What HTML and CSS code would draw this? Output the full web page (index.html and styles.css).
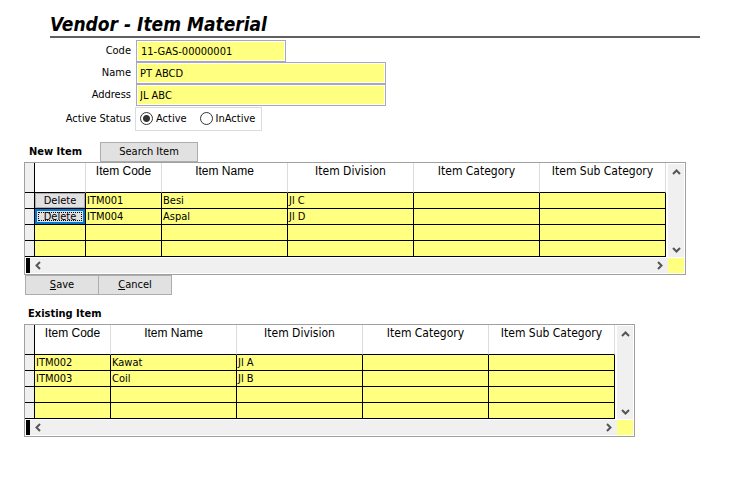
FILE: index.html
```html
<!DOCTYPE html>
<html lang="en">
<head>
<meta charset="utf-8">
<title>Vendor - Item Material</title>
<link rel="stylesheet" href="styles.css">
</head>
<body>
<main class="page">
  <h1 class="title">Vendor - Item Material</h1>

  <form class="vendor">
    <label for="code">Code</label>
    <input class="field field-short field-indent" id="code" type="text" value="11-GAS-00000001">
    <label for="name">Name</label>
    <input class="field" id="name" type="text" value="PT ABCD">
    <label for="address">Address</label>
    <input class="field" id="address" type="text" value="JL ABC">
    <span id="status-label">Active Status</span>
    <div class="status" role="radiogroup" aria-labelledby="status-label">
      <label class="option"><input type="radio" name="status" checked>Active</label>
      <label class="option"><input type="radio" name="status">InActive</label>
    </div>
  </form>

  <section class="new-item">
    <div class="section-head">
      <h2>New Item</h2>
      <button class="btn btn-search" type="button">Search Item</button>
    </div>
    <div class="grid grid-new">
      <div class="sheet">
        <table>
          <colgroup><col class="c-mark"><col class="c-action"><col class="c-code"><col><col><col><col></colgroup>
          <thead>
            <tr><th class="mark"></th><th></th><th class="alt">Item Code</th><th class="alt">Item Name</th><th>Item Division</th><th>Item Category</th><th>Item Sub Category</th></tr>
          </thead>
          <tbody>
            <tr><td class="mark"></td><td class="action"><button class="delete" type="button">Delete</button></td><td>ITM001</td><td>Besi</td><td>Jl C</td><td></td><td></td></tr>
            <tr><td class="mark"></td><td class="action"><button class="delete delete-current" type="button">Delete</button></td><td>ITM004</td><td>Aspal</td><td>Jl D</td><td></td><td></td></tr>
            <tr><td class="mark"></td><td></td><td></td><td></td><td></td><td></td><td></td></tr>
            <tr><td class="mark"></td><td></td><td></td><td></td><td></td><td></td><td></td></tr>
          </tbody>
        </table>
      </div>
      <div class="vbar">
        <svg width="9" height="6" viewBox="0 0 9 6"><path d="M1 5 4.500 1.500 8 5"/></svg>
        <svg width="9" height="6" viewBox="0 0 9 6"><path d="M1 1 4.500 4.500 8 1"/></svg>
      </div>
      <div class="hbar">
        <svg width="6" height="9" viewBox="0 0 6 9"><path d="M5 1 1.500 4.500 5 8"/></svg>
        <svg width="6" height="9" viewBox="0 0 6 9"><path d="M1 1 4.500 4.500 1 8"/></svg>
      </div>
      <div class="corner"></div>
    </div>
    <div class="actions">
      <button class="btn" type="button"><u>S</u>ave</button>
      <button class="btn" type="button"><u>C</u>ancel</button>
    </div>
  </section>

  <section class="existing-item">
    <h2>Existing Item</h2>
    <div class="grid grid-existing">
      <div class="sheet">
        <table>
          <colgroup><col class="c-mark"><col class="c-code"><col><col><col><col></colgroup>
          <thead>
            <tr><th class="mark"></th><th class="alt">Item Code</th><th class="alt">Item Name</th><th>Item Division</th><th>Item Category</th><th>Item Sub Category</th></tr>
          </thead>
          <tbody>
            <tr><td class="mark"></td><td>ITM002</td><td>Kawat</td><td>Jl A</td><td></td><td></td></tr>
            <tr><td class="mark"></td><td>ITM003</td><td>Coil</td><td>Jl B</td><td></td><td></td></tr>
            <tr><td class="mark"></td><td></td><td></td><td></td><td></td><td></td></tr>
            <tr><td class="mark"></td><td></td><td></td><td></td><td></td><td></td></tr>
          </tbody>
        </table>
      </div>
      <div class="vbar">
        <svg width="9" height="6" viewBox="0 0 9 6"><path d="M1 5 4.500 1.500 8 5"/></svg>
        <svg width="9" height="6" viewBox="0 0 9 6"><path d="M1 1 4.500 4.500 8 1"/></svg>
      </div>
      <div class="hbar">
        <svg width="6" height="9" viewBox="0 0 6 9"><path d="M5 1 1.500 4.500 5 8"/></svg>
        <svg width="6" height="9" viewBox="0 0 6 9"><path d="M1 1 4.500 4.500 1 8"/></svg>
      </div>
      <div class="corner"></div>
    </div>
  </section>
</main>
</body>
</html>
```
FILE: styles.css
```css
* { box-sizing: border-box; }

body {
  margin: 0;
  background: #fff;
  color: #000;
  font: 11px/14px Tahoma, "DejaVu Sans Condensed", "DejaVu Sans", sans-serif;
}

button, input { font: inherit; color: inherit; }

.page { padding: 12px 50px 24px 24px; }

.title {
  margin: 0 0 2px 26px;
  border-bottom: 2px solid #606060;
  font-size: 19px;
  line-height: 24px;
  font-style: italic;
}

h2 {
  margin: 0;
  font-size: 11px;
  line-height: 14px;
}

/* Vendor form */
.vendor {
  display: grid;
  grid-template-columns: 107px minmax(0, 250px);
  grid-template-rows: repeat(3, 22px) 25px;
  column-gap: 5px;
  align-items: center;
}

.vendor > label, .vendor > span { text-align: right; }

.field {
  width: 100%;
  height: 22px;
  border: 1px solid #a9a9b4;
  padding: 0 3px;
  background: #ffff80;
  box-shadow: inset 0 0 0 1px #fff;
}

.field-short { width: 150px; }
.field-indent { padding-left: 4px; }

.status {
  display: flex;
  gap: 13px;
  justify-self: start;
  margin-left: -1px;
  border: 1px solid #dcdcdc;
  padding: 4px 6px 4px 4px;
}

.option {
  display: flex;
  align-items: center;
  gap: 3px;
}

.option input {
  appearance: none;
  width: 13px;
  height: 13px;
  margin: 0;
  border: 1px solid #333;
  border-radius: 50%;
  background: #fff;
}

.option input:checked { background: radial-gradient(circle, #333 3px, #fff 4px); }

/* Buttons */
.btn {
  height: 20px;
  min-width: 74px;
  border: 1px solid #adadad;
  padding: 0 8px;
  background: #e1e1e1;
}

.section-head {
  display: flex;
  align-items: center;
  gap: 18px;
  margin-top: 11px;
  padding-left: 5px;
}

.btn-search { min-width: 98px; }

.actions { display: flex; margin-left: 1px; }
.actions .btn + .btn { margin-left: -1px; }

/* Data grids */
.grid {
  display: grid;
  grid-template-columns: minmax(0, 1fr) 16px;
  grid-template-rows: auto 15px;
  column-gap: 2px;
  row-gap: 1px;
  border: 1px solid #a0a0a0;
  padding: 0 1px 1px 0;
}

.grid-new { max-width: 662px; }
.grid-existing { max-width: 611px; }

table {
  width: 100%;
  table-layout: fixed;
  border-collapse: separate;
  border-spacing: 0;
}

.c-mark { width: 10px; }
.c-action { width: 51px; }
.c-code { width: 76px; }

th {
  height: 30px;
  border-right: 1px solid #dcdcdc;
  border-bottom: 1px solid #000;
  padding: 0;
  font-size: 12px;
  line-height: 16px;
  font-weight: normal;
  vertical-align: top;
  white-space: nowrap;
}

.alt { font-family: "Liberation Sans", Arial, sans-serif; }

td {
  height: 16px;
  border-right: 1px solid #000;
  border-bottom: 1px solid #000;
  padding: 0 0 0 1px;
  background: #ffff80;
  white-space: nowrap;
}

.mark {
  border-right: 1px solid #000;
  padding: 0;
  background: #f0f0f0;
}

.action { padding: 0; }

.delete {
  display: block;
  width: 100%;
  height: 15px;
  border: 1px solid #adadad;
  padding: 0;
  background: #e1e1e1;
  line-height: 13px;
}

.delete-current {
  border: 2px solid #0078d7;
  outline: 1px dotted #000;
  outline-offset: -4px;
  line-height: 11px;
}

.vbar, .hbar {
  display: flex;
  justify-content: space-between;
  align-items: center;
  background: #f0f0f0;
}

.vbar {
  flex-direction: column;
  margin-top: 1px;
  padding: 5px 0 4px;
}

.hbar {
  border-left: 4px solid #000;
  margin: 0 -2px 0 1px;
  padding: 0 5px;
}

.vbar path, .hbar path {
  fill: none;
  stroke: #555;
  stroke-width: 2;
}

.corner { background: #ffff80; }

.existing-item { margin-top: 12px; }
.existing-item h2 { padding: 0 0 3px 4px; }
```
